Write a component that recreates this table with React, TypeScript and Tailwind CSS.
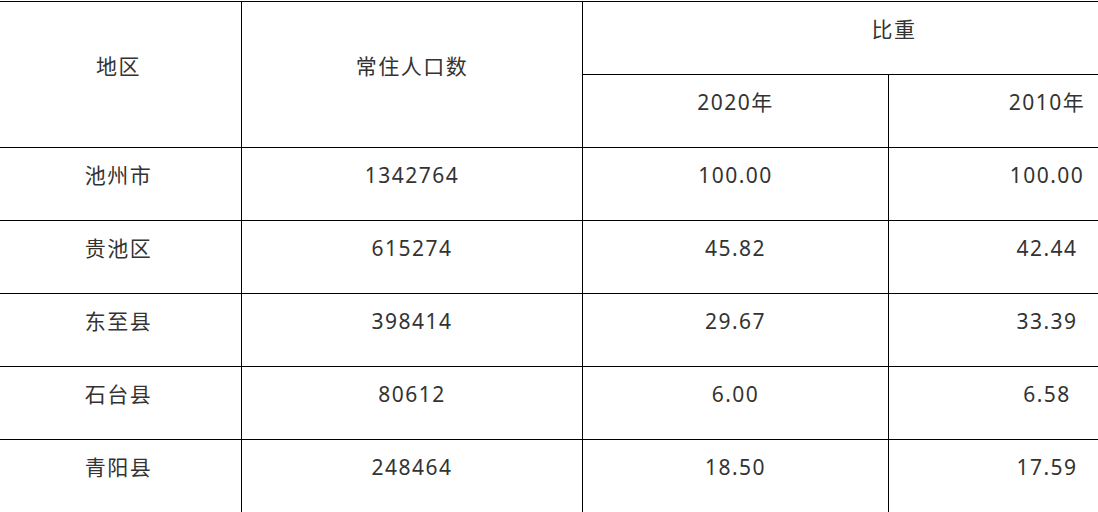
import React from "react";

const rows = [
  ["池州市", "1342764", "100.00", "100.00"],
  ["贵池区", "615274", "45.82", "42.44"],
  ["东至县", "398414", "29.67", "33.39"],
  ["石台县", "80612", "6.00", "6.58"],
  ["青阳县", "248464", "18.50", "17.59"],
];

function Cell({ children, className = "" }: { children: React.ReactNode; className?: string }) {
  return (
    <div className={"bg-white flex items-center justify-center pb-[16px] " + className}>
      {children}
    </div>
  );
}

export default function App() {
  return (
    <div
      className="w-[1098px] h-[512px] overflow-hidden bg-white text-[#333333] text-[21px] tracking-[1.5px]"
      style={{ fontFamily: '"Noto Sans", "Noto Sans CJK SC", sans-serif' }}
    >
      <div className="mt-[1px] ml-[-5px] w-fit grid grid-cols-[245px_340px_305px_316px] auto-rows-[72px] gap-px bg-black p-px">
        <Cell className="row-span-2">地区</Cell>
        <Cell className="row-span-2">常住人口数</Cell>
        <Cell className="col-span-2">比重</Cell>
        <Cell>2020年</Cell>
        <Cell>2010年</Cell>
        {rows.map((r) => (
          <React.Fragment key={r[0]}>
            {r.map((c, i) => (
              <Cell key={i}>{c}</Cell>
            ))}
          </React.Fragment>
        ))}
      </div>
    </div>
  );
}
